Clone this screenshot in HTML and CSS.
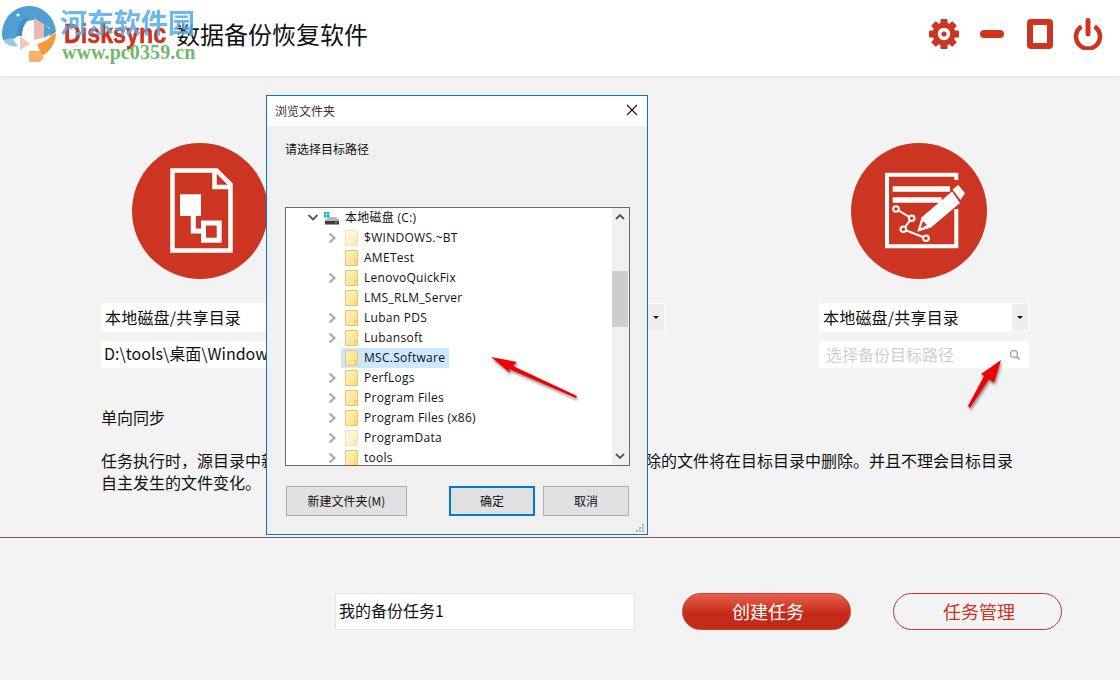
FILE: index.html
```html
<!DOCTYPE html>
<html lang="zh-CN">
<head>
<meta charset="utf-8">
<title>Disksync 数据备份恢复软件</title>
<link rel="stylesheet" href="styles.css">
</head>
<body>
<svg class="defs" width="0" height="0">
  <defs>
    <linearGradient id="fg" x1="0" y1="0" x2="1" y2="1"><stop offset="0" stop-color="#fff3c4"/><stop offset="1" stop-color="#fcdc7c"/></linearGradient>
    <symbol id="folder" viewBox="0 0 13 16">
      <path d="M.5.5H12.500V15.500H.5Z" fill="url(#fg)" stroke="#e8c66e"/>
      <path d="M10 15.500V10.500H12.500" fill="none" stroke="#e8c66e"/>
    </symbol>
    <symbol id="chev" viewBox="0 0 16 20">
      <path d="M5.500 5.500L10.500 10L5.500 14.500" fill="none" stroke="#a6a6a6" stroke-width="2"/>
    </symbol>
  </defs>
</svg>
<div class="app">
  <header class="header">
    <div class="brand">
      <svg class="logo" width="58" height="60" viewBox="0 0 58 60">
        <path d="M2 30A27 28 0 0 1 56 26L50 30L18 30L12 34L3 34Z" fill="#4f9fd3"/>
        <path d="M20 20Q26 14 34 14L34 46L20 46Z" fill="#fff"/>
        <path d="M34 12L50 22L50 30L34 34Z" fill="#e9b9b1"/>
        <path d="M44 18L52 26L44 32Z" fill="#4f9fd3"/>
        <path d="M17 30Q17 16 26 11L28 14Q22 20 22 30Z" fill="#3f8fc4"/>
        <path d="M3 34L12 32L18 40Q8 42 3 34Z" fill="#9cc9e6"/>
        <path d="M20 30L30 38L20 44Z" fill="#f0c8c0"/>
        <path d="M56 27A28 28 0 0 1 42 50L37 38C44 36 50 32 52 29Z" fill="#f29b3e"/>
        <path d="M29 45H40L44 52L40 56H29Z" fill="#f9b16c"/>
        <circle cx="18" cy="9" r="1.600" fill="#fff"/>
      </svg>
      <span class="brand-name">Disksync</span>
      <h1 class="title">数据备份恢复软件</h1>
    </div>
    <div class="window-actions">
      <svg class="gear" width="30" height="30" viewBox="0 0 30 30">
        <g fill="#cc3522">
          <circle cx="15" cy="15" r="11.500"/>
          <rect x="11.500" y="0" width="7" height="30" rx="1"/>
          <rect x="11.500" y="0" width="7" height="30" rx="1" transform="rotate(45 15 15)"/>
          <rect x="11.500" y="0" width="7" height="30" rx="1" transform="rotate(90 15 15)"/>
          <rect x="11.500" y="0" width="7" height="30" rx="1" transform="rotate(135 15 15)"/>
        </g>
        <circle cx="15" cy="15" r="6.200" fill="#fff"/>
        <circle cx="15" cy="15" r="2.600" fill="#cc3522"/>
      </svg>
      <span class="minimize"></span>
      <span class="maximize"></span>
      <svg class="power" width="30" height="32" viewBox="0 0 30 32">
        <path d="M8.500 8.500A12 12 0 1 0 21.500 8.500" fill="none" stroke="#cc3522" stroke-width="4.500"/>
        <path d="M15 2.500V16" fill="none" stroke="#cc3522" stroke-width="5" stroke-linecap="round"/>
      </svg>
    </div>
  </header>

  <main class="main">
    <div class="columns">
      <section class="column">
        <div class="circle">
          <svg width="136" height="136" viewBox="0 0 136 136">
            <g fill="none" stroke="#fff" stroke-width="4.500">
              <path d="M40.500 27.500H84.500L98.500 41.500V107.500H40.500Z"/>
              <path d="M82.500 28V44H98"/>
              <path d="M61.300 73V88H72" stroke-width="5"/>
              <rect x="71.500" y="80" width="15.700" height="17.200" stroke-width="5"/>
            </g>
            <rect x="48" y="51.300" width="21" height="21.700" fill="#fff"/>
          </svg>
        </div>
        <div class="select"><span class="select-text">本地磁盘/共享目录</span><span class="select-btn"><i class="caret"></i></span></div>
        <div class="path"><span class="path-text">D:\tools\桌面\Windows</span></div>
      </section>
      <section class="column column-mid">
        <div class="circle"></div>
        <div class="select"><span class="select-text">本地磁盘/共享目录</span><span class="select-btn"><i class="caret"></i></span></div>
      </section>
      <section class="column column-right">
        <div class="circle">
          <svg width="136" height="136" viewBox="0 0 136 136">
            <g fill="none" stroke="#fff">
              <path d="M105.300 37V31.700H36V103.300H105.300V66" stroke-width="4"/>
              <path d="M41.700 46H99M41.700 57H90.700" stroke-width="5.500"/>
              <path d="M45 66L60.700 75.300L52.300 86.300L75 95.300" stroke-width="2"/>
              <g fill="#cc3522" stroke-width="2">
                <circle cx="45" cy="66" r="2.800"/>
                <circle cx="60.700" cy="75.300" r="2.800"/>
                <circle cx="52.300" cy="86.300" r="2.800"/>
                <circle cx="75" cy="95.300" r="2.800"/>
              </g>
            </g>
            <path d="M66.300 88.700L70.700 74.300L101 48.500L109 60L79.700 84.700Z" fill="#fff"/>
            <path d="M101.500 46.500L107.300 42L114 50.300L109.500 57Z" fill="#fff"/>
            <path d="M69.500 85.500L72 78L76 82Z" fill="#cc3522"/>
          </svg>
        </div>
        <div class="select"><span class="select-text">本地磁盘/共享目录</span><span class="select-btn"><i class="caret"></i></span></div>
        <div class="path">
          <span class="path-text placeholder">选择备份目标路径</span>
          <svg class="search" width="12" height="12" viewBox="0 0 12 12"><circle cx="5" cy="5" r="3.500" fill="none" stroke="#aaa" stroke-width="1.600"/><path d="M7.500 7.500L10.500 10.500" stroke="#aaa" stroke-width="2"/></svg>
        </div>
      </section>
    </div>
    <h2 class="mode">单向同步</h2>
    <p class="desc">任务执行时，源目录中新增和修改的文件将会同步到目标目录中，源目录中删除的文件将在目标目录中删除。并且不理会目标目录自主发生的文件变化。</p>
  </main>

  <footer class="footer">
    <div class="task-name">我的备份任务1</div>
    <button class="btn btn-primary">创建任务</button>
    <button class="btn btn-outline">任务管理</button>
  </footer>

  <div class="watermark">
    <span class="wm-cn">河东软件园</span>
    <span class="wm-url">www.pc0359.cn</span>
  </div>

  <div class="dialog">
    <div class="dialog-title">
      <span>浏览文件夹</span>
      <svg width="12" height="12" viewBox="0 0 12 12"><path d="M1 1L11 11M11 1L1 11" stroke="#111" stroke-width="1.100"/></svg>
    </div>
    <div class="dialog-body">
      <div class="prompt">请选择目标路径</div>
      <div class="tree">
        <div class="tree-list">
          <div class="row row-root">
            <svg class="root-chev" width="16" height="20" viewBox="0 0 16 20"><path d="M3.500 7L8 11.500L12.500 7" fill="none" stroke="#555" stroke-width="1.800"/></svg>
            <div class="item">
              <svg class="disk" width="15" height="13" viewBox="0 0 15 13">
                <g fill="#12a7ef"><rect x="0" y="0" width="2.500" height="2.500"/><rect x="3" y="0" width="2.500" height="2.500"/><rect x="0" y="3" width="2.500" height="2.500"/><rect x="3" y="3" width="2.500" height="2.500"/></g>
                <path d="M1 8L5 5H12L15 8V12H1Z" fill="#b9b9b9"/><rect x="1" y="9" width="14" height="3.500" fill="#3c3c3c"/><rect x="11" y="10" width="2" height="1.200" fill="#4cd44c"/>
              </svg>
              <span class="label">本地磁盘 (C:)</span>
            </div>
          </div>
          <div class="row"><svg class="chev"><use href="#chev"/></svg><div class="item"><svg class="folder faded"><use href="#folder"/></svg><span class="label">$WINDOWS.~BT</span></div></div>
          <div class="row"><span class="chev"></span><div class="item"><svg class="folder"><use href="#folder"/></svg><span class="label">AMETest</span></div></div>
          <div class="row"><svg class="chev"><use href="#chev"/></svg><div class="item"><svg class="folder"><use href="#folder"/></svg><span class="label">LenovoQuickFix</span></div></div>
          <div class="row"><span class="chev"></span><div class="item"><svg class="folder"><use href="#folder"/></svg><span class="label">LMS_RLM_Server</span></div></div>
          <div class="row"><svg class="chev"><use href="#chev"/></svg><div class="item"><svg class="folder"><use href="#folder"/></svg><span class="label">Luban PDS</span></div></div>
          <div class="row"><svg class="chev"><use href="#chev"/></svg><div class="item"><svg class="folder"><use href="#folder"/></svg><span class="label">Lubansoft</span></div></div>
          <div class="row"><span class="chev"></span><div class="item selected"><svg class="folder"><use href="#folder"/></svg><span class="label">MSC.Software</span></div></div>
          <div class="row"><svg class="chev"><use href="#chev"/></svg><div class="item"><svg class="folder"><use href="#folder"/></svg><span class="label">PerfLogs</span></div></div>
          <div class="row"><svg class="chev"><use href="#chev"/></svg><div class="item"><svg class="folder"><use href="#folder"/></svg><span class="label">Program Files</span></div></div>
          <div class="row"><svg class="chev"><use href="#chev"/></svg><div class="item"><svg class="folder"><use href="#folder"/></svg><span class="label">Program Files (x86)</span></div></div>
          <div class="row"><svg class="chev"><use href="#chev"/></svg><div class="item"><svg class="folder faded"><use href="#folder"/></svg><span class="label">ProgramData</span></div></div>
          <div class="row"><svg class="chev"><use href="#chev"/></svg><div class="item"><svg class="folder"><use href="#folder"/></svg><span class="label">tools</span></div></div>
        </div>
        <div class="scrollbar">
          <svg width="16" height="17" viewBox="0 0 16 17"><path d="M4 11L8 7L12 11" fill="none" stroke="#555" stroke-width="1.800"/></svg>
          <div class="thumb"></div>
          <svg class="scroll-down" width="16" height="17" viewBox="0 0 16 17"><path d="M4 6L8 10L12 6" fill="none" stroke="#555" stroke-width="1.800"/></svg>
        </div>
      </div>
      <div class="dialog-actions">
        <button class="dlg-btn dlg-new">新建文件夹(M)</button>
        <button class="dlg-btn dlg-ok">确定</button>
        <button class="dlg-btn dlg-cancel">取消</button>
      </div>
    </div>
    <svg class="grip" width="10" height="10" viewBox="0 0 10 10"><g fill="#b4b4b4"><rect x="7" y="1" width="2" height="2"/><rect x="4" y="4" width="2" height="2"/><rect x="7" y="4" width="2" height="2"/><rect x="1" y="7" width="2" height="2"/><rect x="4" y="7" width="2" height="2"/><rect x="7" y="7" width="2" height="2"/></g></svg>
  </div>

  <svg class="arrows" width="1120" height="680" viewBox="0 0 1120 680">
    <defs><filter id="sh" x="-30%" y="-30%" width="170%" height="170%"><feDropShadow dx="1" dy="2" stdDeviation="1.500" flood-color="#000" flood-opacity=".5"/></filter></defs>
    <g fill="#f00000" filter="url(#sh)">
      <path d="M491 357L517 362L513 366L577 396L576 398L509 369L510 373Z"/>
      <path d="M1001 360L994 383L989 379L970 408L968 406L984 376L981 374Z"/>
    </g>
  </svg>
</div>
</body>
</html>
```
FILE: styles.css
```css
* { box-sizing: border-box; }
html, body { margin: 0; padding: 0; }
body { width: 1120px; height: 680px; overflow: hidden; font-family: "Noto Sans CJK SC", "Open Sans", sans-serif; color: #111; background: #f3f3f3; }
.defs { position: absolute; }
.app { position: relative; width: 1120px; height: 680px; overflow: hidden; background: #f3f3f3; }

.header { height: 76px; background: #fff; display: flex; align-items: flex-start; justify-content: space-between; box-shadow: 0 1px 4px rgba(0,0,0,.08); }
.brand { display: flex; align-items: flex-start; }
.logo { margin-top: 6px; flex: none; display: block; }
.brand-name { width: 118px; margin: 14px 0 0 6px; font: bold 28px/40px "Liberation Sans", sans-serif; color: #cb3524; -webkit-text-stroke: .6px #cb3524; transform: scaleX(.83); transform-origin: left center; white-space: nowrap; }
.title { margin: 14px 0 0 -6px; font-size: 24px; line-height: 40px; font-weight: 400; color: #111; }
.window-actions { display: flex; align-items: center; height: 32px; margin: 18px 17px 0 0; }
.gear { display: block; }
.minimize { width: 24px; height: 8px; border-radius: 4px; background: #cc3522; margin-left: 21px; }
.maximize { width: 26px; height: 30px; border: 6px solid #cc3522; border-radius: 4px; margin-left: 23px; }
.power { display: block; margin-left: 20px; }

.main { height: 461px; padding: 67px 0 0 101px; }
.columns { display: flex; }
.column { width: 210px; flex: none; }
.column-mid { margin-left: 144px; }
.column-right { margin-left: 154px; }
.circle { width: 136px; height: 136px; border-radius: 50%; background: #cc3522; margin: 0 0 24px 31px; }
.column-right .circle { margin-left: 32px; }
.circle svg { display: block; }
.select { display: flex; height: 29px; background: #fff; border: 1px solid #fff; align-items: center; }
.select-text { flex: 1; padding-left: 3px; font-size: 16px; line-height: 27px; letter-spacing: .2px; white-space: nowrap; overflow: hidden; }
.select-btn { width: 16px; height: 27px; background: #eee; display: flex; align-items: center; justify-content: center; }
.caret { border: 3px solid transparent; border-top: 3px solid #111; border-bottom: 0; }
.path { display: flex; align-items: center; justify-content: space-between; height: 27px; margin-top: 9px; background: #fff; padding: 0 8px 0 3px; }
.path-text { font-size: 16px; line-height: 25px; margin-bottom: 2px; white-space: nowrap; overflow: hidden; }
.placeholder { color: #cfcfcf; padding-left: 4px; margin-bottom: 0; }
.search { display: block; }
.mode { margin: 38px 0 0; font-size: 16px; line-height: 22px; font-weight: 400; }
.desc { margin: 21px 0 0; width: 915px; font-size: 16px; line-height: 22px; }

.footer { height: 143px; border-top: 1px solid #8c5a55; display: flex; align-items: flex-start; padding: 55px 0 0 335px; }
.task-name { width: 300px; height: 37px; background: #fff; border: 1px solid #e4e4e4; font-size: 16px; line-height: 33px; padding-left: 3px; }
.btn { width: 169px; height: 37px; border-radius: 19px; font-family: inherit; font-size: 18px; line-height: 1; padding: 0 0 2px 3px; }
.btn-primary { margin-left: 47px; color: #fff; border: 1px solid #c9412f; background: linear-gradient(#e9604f, #c52b19 55%, #c22a18); }
.btn-outline { margin-left: 42px; color: #cb3524; border: 1px solid #cb3524; background: transparent; }

.watermark { position: absolute; left: 60px; top: 4px; }
.wm-cn { display: block; font: 700 27px/36px "Noto Sans CJK SC", sans-serif; color: #55ace6; opacity: .85; white-space: nowrap; }
.wm-url { display: block; margin: 1px 0 0 2px; font: bold 20px/22px "Liberation Serif", serif; letter-spacing: .1px; color: #71b96b; white-space: nowrap; }

.dialog { position: absolute; left: 266px; top: 95px; width: 382px; height: 440px; border: 1px solid #0078d7; background: #f0f0f0; font-family: "Open Sans", "Noto Sans CJK SC", sans-serif; font-size: 12px; color: #111; }
.dialog-title { height: 30px; background: #fff; display: flex; align-items: center; justify-content: space-between; padding: 0 9px 2px 8px; font-family: "Noto Sans CJK SC", sans-serif; color: #333; }
.dialog-title svg { display: block; }
.dialog-body { padding: 14px 18px 0; }
.prompt { height: 17px; line-height: 17px; font-family: "Noto Sans CJK SC", sans-serif; }
.tree { margin-top: 50px; width: 345px; height: 259px; border: 1px solid #696969; background: #fff; display: flex; overflow: hidden; }
.tree-list { flex: 1; min-width: 0; }
.row { display: flex; align-items: center; height: 20px; }
.row .chev { flex: none; width: 16px; height: 20px; margin-left: 38px; display: block; }
.root-chev { flex: none; margin-left: 19px; display: block; }
.item { display: flex; align-items: center; height: 20px; margin-left: 1px; padding: 0 4px; white-space: nowrap; }
.row-root .item { margin-left: -1px; }
.item.selected { background: #cce8ff; }
.label { padding-bottom: 2px; letter-spacing: .28px; }
.folder { width: 13px; height: 16px; margin-right: 6px; flex: none; display: block; }
.folder.faded { opacity: .5; }
.disk { margin-right: 6px; flex: none; display: block; }
.scrollbar { width: 17px; flex: none; background: #f0f0f0; position: relative; }
.scrollbar svg { display: block; }
.thumb { height: 56px; width: 16px; margin-top: 46px; background: #cdcdcd; }
.scroll-down { position: absolute; left: 0; bottom: 0; }
.dialog-actions { display: flex; margin: 20px 0 0 1px; }
.dlg-btn { height: 30px; background: #e1e1e1; border: 1px solid #adadad; font-family: "Noto Sans CJK SC", sans-serif; font-size: 12px; color: #111; padding: 0 0 2px; }
.dlg-new { width: 121px; }
.dlg-ok { width: 86px; margin-left: 42px; border: 2px solid #0078d7; }
.dlg-cancel { width: 86px; margin-left: 8px; }
.grip { position: absolute; right: 2px; bottom: 1px; display: block; }
.arrows { position: absolute; left: 0; top: 0; pointer-events: none; }
```
